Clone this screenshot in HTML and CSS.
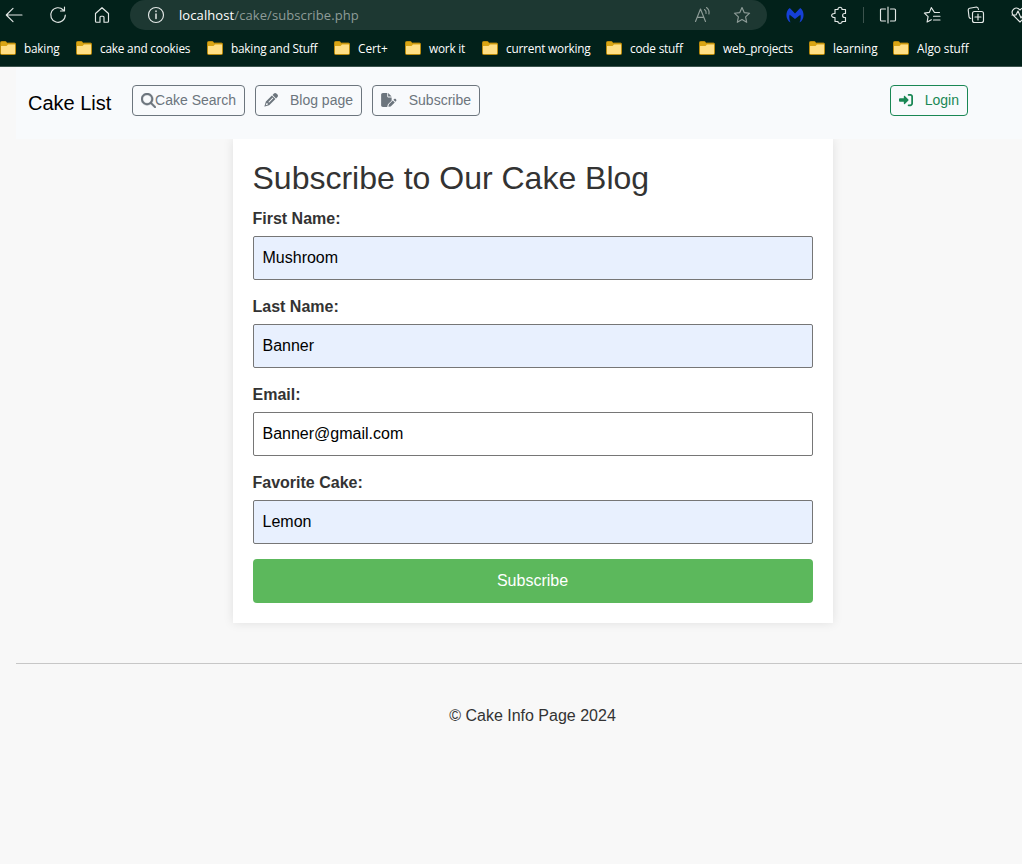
FILE: index.html
```html
<!DOCTYPE html>
<html lang="en">
<head>
<meta charset="utf-8">
<title>Subscribe</title>
<link rel="stylesheet" href="styles.css">
</head>
<body>
<svg class="defs" aria-hidden="true">
  <symbol id="folder" viewBox="0 0 16 14">
    <path d="M.5 1.500q0-1 1-1h4.200l1.600 1.600h7.200q1 0 1 1v9.400q0 1-1 1h-13q-1 0-1-1z" fill="#d9a514" stroke="#b98a0c"/>
    <path d="M1 5h5.500l1.500-1.600h7v9.100q0 .5-.5.5h-13q-.5 0-.5-.5z" fill="#ffdf85"/>
  </symbol>
</svg>
<header class="browser">
  <div class="toolbar">
    <svg class="ic back" viewBox="0 0 18 18"><path d="M17 9H1.500M8 2.300L1.300 9 8 15.700"/></svg>
    <svg class="ic reload" viewBox="0 0 18 18"><path d="M16.300 9A7.300 7.300 0 1 1 14.300 4M15.500 1v4h-4"/></svg>
    <svg class="ic home" viewBox="0 0 18 18"><path d="M2.500 7.500L9 1.700l6.500 5.800v7.700q0 1-1 1H11v-5q0-1-1-1H8q-1 0-1 1v5H3.500q-1 0-1-1z"/></svg>
    <div class="address">
      <svg class="ic info" viewBox="0 0 18 18"><circle cx="9" cy="9" r="7.500"/><path d="M9 8v4.500M9 5v.6" stroke-width="1.500"/></svg>
      <span class="url"><b>localhost</b>/cake/subscribe.php</span>
      <svg class="ic aloud" viewBox="0 0 18 18"><path d="M1.500 15.500L6.500 3l5 12.500M3.200 11.300h6.600M10.500 3.500q2 1.500 1.600 4M12.500 1.500q3.300 2.500 2.400 6.500"/></svg>
      <svg class="ic star" viewBox="0 0 18 18"><path d="M9 1.600l2.200 5 5.400.6-4 3.700 1.100 5.400L9 13.600l-4.700 2.700 1.100-5.400-4-3.700 5.400-.6z"/></svg>
    </div>
    <svg class="ic malware" viewBox="0 0 18 16"><path d="M4.500 15.500C-.8 12.500-.8 4 3.800 1L9 6.500 14.200 1c4.600 3 4.600 11.500-.7 14.500 1.300-2.800 1.500-5.300.9-7.800L9 12 3.600 7.700c-.6 2.500-.4 5 .9 7.800z"/></svg>
    <svg class="ic puzzle" viewBox="0 0 18 18"><path d="M5 3.500h3c-.5-3 4.500-3 4 0h3.500v4h-1c-2.500 0-2.500 4 0 4h1v4H12c.5 2.500-4.500 2.500-4 0H5v-4c-4.500.5-4.500-4.500 0-4z"/></svg>
    <i class="divider"></i>
    <svg class="ic split" viewBox="0 0 18 18"><path d="M6.500 3h-4q-1 0-1 1v10q0 1 1 1h4M11.500 3h4q1 0 1 1v10q0 1-1 1h-4M9 1v16"/></svg>
    <svg class="ic favs" viewBox="0 0 18 18"><path d="M16.500 6.500h-5L8.300 1.600 6.400 6.400l-5 .7 3.700 3.500-1 5.400 4.200-2.300M10.500 10.200h6.500M10.500 14h6.500"/></svg>
    <svg class="ic collections" viewBox="0 0 18 18"><path d="M3.800 12.500q-1.500-.3-1.800-1.700L1.200 4q0-1.500 1.400-1.800l7-1.200q1.500 0 1.900 2.500M7.500 5.500h7q2 0 2 2v7q0 2-2 2h-7q-2 0-2-2v-7q0-2 2-2zM11 8v6M8 11h6"/></svg>
    <svg class="ic health" viewBox="0 0 18 18"><path d="M9 16L2 9C-1 4 5-.5 9 4c4-4.500 10 0 7 5zM1 9h4l2-4 3 7 2-3h4"/></svg>
  </div>
  <nav class="bookmarks">
    <a><svg><use href="#folder"/></svg>baking</a>
    <a><svg><use href="#folder"/></svg>cake and cookies</a>
    <a><svg><use href="#folder"/></svg>baking and Stuff</a>
    <a><svg><use href="#folder"/></svg>Cert+</a>
    <a><svg><use href="#folder"/></svg>work it</a>
    <a><svg><use href="#folder"/></svg>current working</a>
    <a><svg><use href="#folder"/></svg>code stuff</a>
    <a><svg><use href="#folder"/></svg>web_projects</a>
    <a><svg><use href="#folder"/></svg>learning</a>
    <a><svg><use href="#folder"/></svg>Algo stuff</a>
  </nav>
</header>
<div class="page">
  <nav class="navbar">
    <a class="brand">Cake List</a>
    <a class="btn search"><svg viewBox="0 0 512 512"><path d="M416 208c0 45.900-14.900 88.300-40 122.700L502.600 457.400c12.500 12.500 12.500 32.800 0 45.300s-32.800 12.500-45.300 0L330.700 376c-34.400 25.200-76.800 40-122.700 40C93.100 416 0 322.900 0 208S93.100 0 208 0S416 93.100 416 208zM208 352a144 144 0 1 0 0-288 144 144 0 1 0 0 288z"/></svg><span>Cake Search</span></a>
    <a class="btn blog"><svg viewBox="0 0 512 512"><path fill-rule="evenodd" d="M363 20c25-25 65-25 90 0l39 39c25 25 25 65 0 90l-50 50L313 70zM290 93l129 129-211 211q-10 10-25 15L30 495c-9 3-17-5-14-14l47-153q5-15 15-25zM80 393l-18 57 57-17 17-7v-50H86zM310 178L166 322c-15 15 8 38 23 23l144-144c15-15-8-38-23-23z"/></svg><span>Blog page</span></a>
    <a class="btn sub"><svg viewBox="0 0 576 512"><path d="M0 64C0 29 29 0 64 0h160v128c0 18 14 32 32 32h128v125L260 405q-14 14-19 34l-17 68v5H64c-35 0-64-29-64-64zM384 128H256V0zM549 236c16 16 16 41 0 57l-29 29-71-71 29-29c16-16 41-16 57 0zM289 411l138-138 71 71-138 138q-6 6-15 8l-60 15c-11 3-22-7-19-19l15-60q2-9 8-15z"/></svg><span>Subscribe</span></a>
    <a class="btn login"><svg viewBox="0 0 512 512"><path d="M352 96h64c18 0 32 14 32 32v256c0 18-14 32-32 32h-64c-43 0-43 64 0 64h64c53 0 96-43 96-96V128c0-53-43-96-96-96h-64c-43 0-43 64 0 64zM343 239L215 111c-16-16-39-6-39 17v64H32c-18 0-32 14-32 32v64c0 18 14 32 32 32h144v64c0 23 23 33 39 17l128-128c9-9 9-25 0-34z"/></svg><span>Login</span></a>
  </nav>
  <main class="card">
    <h1>Subscribe to Our Cake Blog</h1>
    <form>
      <label for="first">First Name:</label>
      <input id="first" class="filled" type="text" value="Mushroom">
      <label for="last">Last Name:</label>
      <input id="last" class="filled" type="text" value="Banner">
      <label for="email">Email:</label>
      <input id="email" type="email" value="Banner@gmail.com">
      <label for="cake">Favorite Cake:</label>
      <input id="cake" class="filled" type="text" value="Lemon">
      <button type="button">Subscribe</button>
    </form>
  </main>
  <footer>© Cake Info Page 2024</footer>
</div>
</body>
</html>
```
FILE: styles.css
```css
* { box-sizing: border-box; }
html, body { height: 100%; }
body {
  margin: 0;
  background: #f8f8f8;
  color: #333;
  font: 16px/24px "Liberation Sans", Arial, sans-serif;
  overflow: hidden;
}
.defs { display: none; }

.browser {
  height: 67px;
  background: #02211a;
  border-bottom: 1px solid #3c534d;
  color: #fff;
  font-family: "Open Sans", "Noto Sans", sans-serif;
  overflow: hidden;
}
.toolbar { display: flex; height: 30px; align-items: center; width: 1040px; }
.ic {
  width: 18px;
  height: 18px;
  flex: none;
  fill: none;
  stroke: #e3e8e6;
  stroke-width: 1.15;
  stroke-linecap: round;
  stroke-linejoin: round;
}
.back { margin-left: 5px; }
.reload { margin-left: 26px; }
.home { margin-left: 26px; }
.address {
  display: flex;
  align-items: center;
  width: 637px;
  height: 30px;
  margin-left: 19px;
  padding-left: 17px;
  border-radius: 15px;
  background: #1d3832;
}
.url { width: 517px; margin-left: 14px; font-size: 13px; line-height: 20px; letter-spacing: .09px; color: #8e9c98; }
.url b { font-weight: 400; color: #fff; }
.aloud, .star { stroke: #8e9c98; }
.aloud { margin-left: -2px; }
.star { margin-left: 21px; }
.malware { margin-left: 19px; height: 16px; fill: #1640d6; stroke: none; }
.puzzle { margin-left: 26px; }
.divider { width: 1px; height: 16px; margin-left: 15px; background: #3c534d; }
.split { margin-left: 15px; }
.favs { margin-left: 26px; }
.collections { margin-left: 26px; }
.health { margin-left: 26px; }

.bookmarks {
  display: grid;
  grid-template-columns: 76px 131px 127px 71px 77px 124px 93px 110px 84px 110px;
  height: 36px;
  align-items: center;
  font-size: 11.8px;
  line-height: 18px;
  letter-spacing: -.2px;
  white-space: nowrap;
}
.bookmarks a { display: flex; align-items: center; gap: 8px; }
.bookmarks a:nth-child(4), .bookmarks a:nth-child(n+9) { letter-spacing: -.03px; }
.bookmarks svg { width: 16px; height: 14px; flex: none; }

/* The page is wider than the visible window and runs off its right edge. */
.page { width: 1049px; padding-left: 16px; }
.navbar {
  display: flex;
  position: relative;
  z-index: 1;
  height: 72px;
  padding: 18px 81px 0 12px;
  background: #f8fafc;
}
.brand { width: 94px; margin-right: 10px; font-size: 20px; line-height: 36px; color: #000; }
.btn {
  display: flex;
  height: 31px;
  margin-right: 10px;
  padding: 0 8px;
  border: 1px solid #6c757d;
  border-radius: 4px;
  color: #6c757d;
  font-size: 14px;
  line-height: 29px;
  white-space: nowrap;
}
.btn svg { width: 14px; height: 14px; margin-top: 7px; flex: none; fill: currentColor; }
.btn span { margin-left: auto; }
.search { width: 113px; }
.search svg { width: 15px; height: 15px; margin-right: -1px; stroke: currentColor; stroke-width: 12; }
.blog { width: 107px; }
.sub { width: 108px; }
.sub svg { width: 16px; }
.login { width: 78px; margin: 0 0 0 auto; border-color: #198754; color: #198754; }

.card {
  width: 600px;
  height: 484px;
  margin: 0 auto;
  padding: 20px;
  background: #fff;
  box-shadow: 0 0 10px rgba(0, 0, 0, .1);
}
h1 { margin: 0 0 10px; font-size: 32px; font-weight: 400; line-height: 38px; }
label { display: block; margin-bottom: 5px; font-weight: 700; }
input {
  display: block;
  width: 100%;
  height: 44px;
  margin: 0 0 15px;
  padding: 0 9px 1px;
  border: 1px solid #767676;
  border-radius: 2px;
  background: #fff;
  color: #000;
  font: inherit;
}
.filled { background: #e8f0fe; }
button {
  display: block;
  width: 100%;
  height: 44px;
  padding: 0 0 1px;
  border: 0;
  border-radius: 4px;
  background: #5cb85c;
  color: #fff;
  font: inherit;
}
footer { margin-top: 40px; padding: 40px 0 20px; border-top: 1px solid #c7c7c7; text-align: center; }
```
